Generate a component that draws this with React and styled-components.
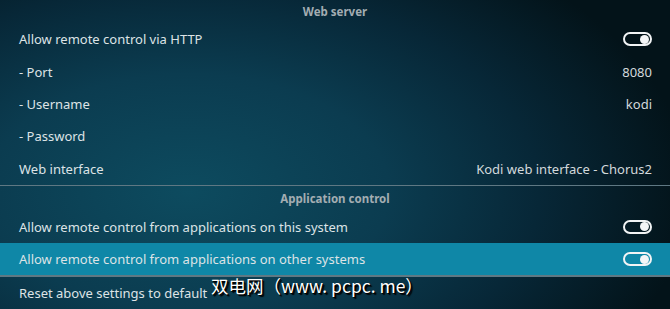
import styled, { createGlobalStyle } from 'styled-components';

const GlobalStyle = createGlobalStyle`
    html, body {
        margin: 0;
        padding: 0;
        width: 670px;
        height: 309px;
        overflow: hidden;
    }
    body {
        font-family: 'Noto Sans', 'Open Sans', sans-serif;
    }
`

const webServer = [
    { label: 'Allow remote control via HTTP', toggle: true },
    { label: '- Port', value: '8080' },
    { label: '- Username', value: 'kodi' },
    { label: '- Password' },
    { label: 'Web interface', value: 'Kodi web interface - Chorus2' },
];

const appControl = [
    { label: 'Allow remote control from applications on this system', toggle: true },
    { label: 'Allow remote control from applications on other systems', toggle: true, active: true },
];

function Row({ item }) {
    return (
        <SettingRow $active={item.active}>
            <Label>{item.label}</Label>
            {item.toggle ? <Toggle><Knob /></Toggle> : <Value>{item.value}</Value>}
        </SettingRow>
    );
}

export default function App(){
    return(
    <Screen>
        <GlobalStyle />
        <SectionHeader $first>Web server</SectionHeader>
        {webServer.map(item => <Row key={item.label} item={item} />)}
        <Divider />
        <SectionHeader>Application control</SectionHeader>
        {appControl.map(item => <Row key={item.label} item={item} />)}
        <Divider $thick />
        <SettingRow>
            <Label>Reset above settings to default</Label>
        </SettingRow>
        <Watermark>双电网（www. pcpc. me）</Watermark>
    </Screen>
    );
}

const Screen = styled.div`
    position: relative;
    width: 670px;
    height: 309px;
    display: flex;
    flex-direction: column;
    overflow: hidden;
    background:
        radial-gradient(ellipse 75% 95% at 28% 62%, #0d4b5f 0%, #0b3c50 40%, #072737 70%, #031319 100%);
`

const SectionHeader = styled.div`
    height: ${props => props.$first ? '23px' : '24px'};
    flex-shrink: 0;
    display: flex;
    align-items: center;
    justify-content: center;
    font-size: 11.5px;
    font-weight: 700;
    color: #a3adb2;
`

const SettingRow = styled.div`
    height: 32.4px;
    flex-shrink: 0;
    display: flex;
    align-items: center;
    justify-content: space-between;
    padding: 0 18px 0 19px;
    font-size: 13px;
    color: #dde3e6;
    background: ${props => props.$active ? '#0f87a7' : 'transparent'};
`

const Label = styled.span`
    white-space: nowrap;
`

const Value = styled.span`
    color: #d3d9dc;
    white-space: nowrap;
`

const Toggle = styled.div`
    width: 23px;
    height: 10px;
    border: 2px solid #f2f4f5;
    border-radius: 8px;
    display: flex;
    align-items: center;
    justify-content: flex-end;
    padding: 0 1px;
`

const Knob = styled.div`
    width: 9px;
    height: 9px;
    border-radius: 50%;
    background: #f4f6f7;
`

const Divider = styled.div`
    height: ${props => props.$thick ? '2px' : '1.5px'};
    flex-shrink: 0;
    background: #5f7883;
`

const Watermark = styled.div`
    position: absolute;
    left: 211px;
    top: 273px;
    font-family: 'Noto Sans CJK SC', sans-serif;
    font-size: 17.5px;
    color: #ffffff;
    text-shadow: 1px 1px 0 #000, 2px 2px 1px #000;
    white-space: nowrap;
`
